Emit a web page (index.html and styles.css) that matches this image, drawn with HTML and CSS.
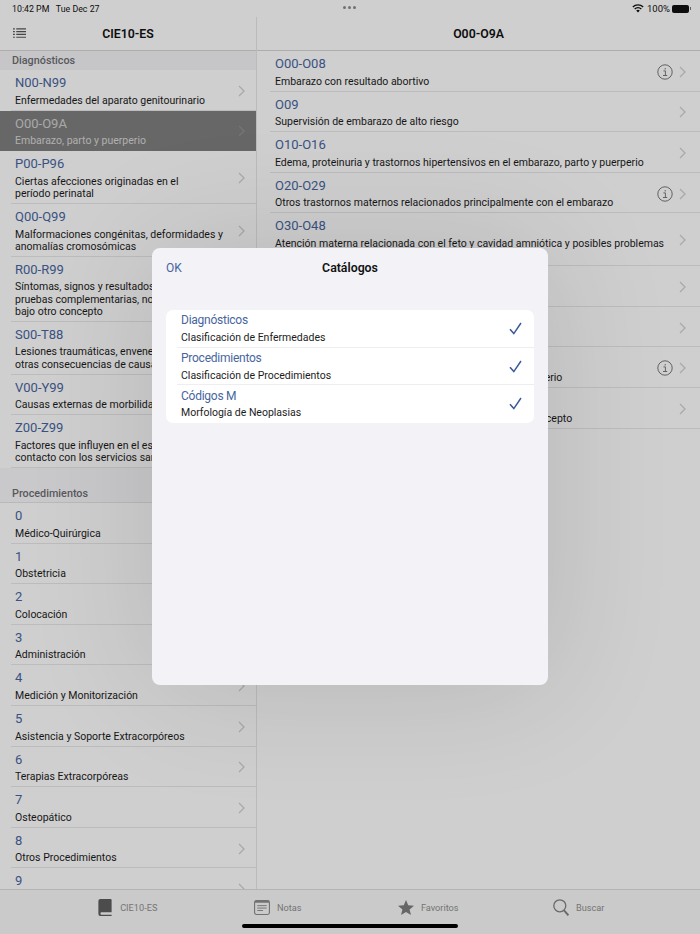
FILE: index.html
```html
<!DOCTYPE html>
<html lang="es">
<head>
<meta charset="utf-8">
<title>CIE10-ES</title>
<link rel="stylesheet" href="styles.css">
</head>
<body>
<svg class="defs" width="0" height="0" aria-hidden="true">
  <symbol id="chev" viewBox="0 0 7 12"><path d="M1 1l5 5-5 5" fill="none" stroke="currentColor" stroke-width="1.3"/></symbol>
  <symbol id="info" viewBox="0 0 16 16"><circle cx="8" cy="8" r="7.200" fill="none" stroke="currentColor" stroke-width="1"/><path d="M6.400 6.900h2v4.500M6 11.500h4.200M8.200 4v1.500" fill="none" stroke="currentColor" stroke-width="1"/></symbol>
  <symbol id="check" viewBox="0 0 13 13"><path d="M1 7.200l3.800 4.400L12 1" fill="none" stroke="currentColor" stroke-width="1.500"/></symbol>
</svg>
<div class="app">
  <div class="status">
    <span class="status-time">10:42 PM&nbsp;&nbsp;&nbsp;Tue Dec 27</span>
    <span class="status-dots"><i></i><i></i><i></i></span>
    <span class="status-right">
      <svg class="wifi" viewBox="0 0 14 10"><path d="M7 9.600L4.900 7.400a3 3 0 0 1 4.200 0zM3.700 6.200L2.600 5a6.300 6.300 0 0 1 8.800 0l-1.100 1.200a4.700 4.700 0 0 0-6.600 0zM1.500 3.900L.4 2.800a9.400 9.400 0 0 1 13.200 0l-1.100 1.100a7.800 7.800 0 0 0-11 0z" fill="#111"/></svg>
      <span>100%</span>
      <span class="battery"></span>
    </span>
  </div>
  <div class="columns">
    <aside class="side">
      <div class="nav nav-side">
        <svg class="list-icon" viewBox="0 0 14 13"><path d="M0 1.500h2M3.500 1.500H14M0 4.500h2M3.500 4.500H14M0 7.500h2M3.500 7.500H14M0 10.500h2M3.500 10.500H14" stroke="#555" stroke-width="1.200" fill="none"/></svg>
        <h1 class="nav-title">CIE10-ES</h1>
      </div>
      <div class="side-scroll">
        <div class="section first">Diagnósticos</div>
        <div class="row"><div class="txt"><div class="code">N00-N99</div><div class="sub">Enfermedades del aparato genitourinario</div></div><svg class="chev"><use href="#chev"/></svg></div>
        <div class="row sel"><div class="txt"><div class="code">O00-O9A</div><div class="sub">Embarazo, parto y puerperio</div></div><svg class="chev"><use href="#chev"/></svg></div>
        <div class="row"><div class="txt"><div class="code">P00-P96</div><div class="sub">Ciertas afecciones originadas en el<br>período perinatal</div></div><svg class="chev"><use href="#chev"/></svg></div>
        <div class="row"><div class="txt"><div class="code">Q00-Q99</div><div class="sub">Malformaciones congénitas, deformidades y<br>anomalías cromosómicas</div></div><svg class="chev"><use href="#chev"/></svg></div>
        <div class="row"><div class="txt"><div class="code">R00-R99</div><div class="sub">Síntomas, signos y resultados anormales de<br>pruebas complementarias, no clasificados<br>bajo otro concepto</div></div><svg class="chev"><use href="#chev"/></svg></div>
        <div class="row"><div class="txt"><div class="code">S00-T88</div><div class="sub">Lesiones traumáticas, envenenamientos y<br>otras consecuencias de causas externas</div></div><svg class="chev"><use href="#chev"/></svg></div>
        <div class="row"><div class="txt"><div class="code">V00-Y99</div><div class="sub">Causas externas de morbilidad</div></div><svg class="chev"><use href="#chev"/></svg></div>
        <div class="row"><div class="txt"><div class="code">Z00-Z99</div><div class="sub">Factores que influyen en el estado de salud y<br>contacto con los servicios sanitarios</div></div><svg class="chev"><use href="#chev"/></svg></div>
        <div class="section second">Procedimientos</div>
        <div class="row"><div class="txt"><div class="code">0</div><div class="sub">Médico-Quirúrgica</div></div><svg class="chev"><use href="#chev"/></svg></div>
        <div class="row"><div class="txt"><div class="code">1</div><div class="sub">Obstetricia</div></div><svg class="chev"><use href="#chev"/></svg></div>
        <div class="row"><div class="txt"><div class="code">2</div><div class="sub">Colocación</div></div><svg class="chev"><use href="#chev"/></svg></div>
        <div class="row"><div class="txt"><div class="code">3</div><div class="sub">Administración</div></div><svg class="chev"><use href="#chev"/></svg></div>
        <div class="row"><div class="txt"><div class="code">4</div><div class="sub">Medición y Monitorización</div></div><svg class="chev"><use href="#chev"/></svg></div>
        <div class="row"><div class="txt"><div class="code">5</div><div class="sub">Asistencia y Soporte Extracorpóreos</div></div><svg class="chev"><use href="#chev"/></svg></div>
        <div class="row"><div class="txt"><div class="code">6</div><div class="sub">Terapias Extracorpóreas</div></div><svg class="chev"><use href="#chev"/></svg></div>
        <div class="row"><div class="txt"><div class="code">7</div><div class="sub">Osteopático</div></div><svg class="chev"><use href="#chev"/></svg></div>
        <div class="row"><div class="txt"><div class="code">8</div><div class="sub">Otros Procedimientos</div></div><svg class="chev"><use href="#chev"/></svg></div>
        <div class="row"><div class="txt"><div class="code">9</div><div class="sub">&nbsp;</div></div><svg class="chev"><use href="#chev"/></svg></div>
      </div>
    </aside>
    <main class="detail">
      <div class="nav"><h2 class="nav-title">O00-O9A</h2></div>
      <div class="detail-list">
        <div class="row"><div class="txt"><div class="code">O00-O08</div><div class="sub">Embarazo con resultado abortivo</div></div><svg class="info"><use href="#info"/></svg><svg class="chev"><use href="#chev"/></svg></div>
        <div class="row"><div class="txt"><div class="code">O09</div><div class="sub">Supervisión de embarazo de alto riesgo</div></div><svg class="chev"><use href="#chev"/></svg></div>
        <div class="row"><div class="txt"><div class="code">O10-O16</div><div class="sub">Edema, proteinuria y trastornos hipertensivos en el embarazo, parto y puerperio</div></div><svg class="chev"><use href="#chev"/></svg></div>
        <div class="row"><div class="txt"><div class="code">O20-O29</div><div class="sub">Otros trastornos maternos relacionados principalmente con el embarazo</div></div><svg class="info"><use href="#info"/></svg><svg class="chev"><use href="#chev"/></svg></div>
        <div class="row"><div class="txt"><div class="code">O30-O48</div><div class="sub">Atención materna relacionada con el feto y cavidad amniótica y posibles problemas<br>de parto</div></div><svg class="chev"><use href="#chev"/></svg></div>
        <div class="row"><div class="txt"><div class="code">O60-O77</div><div class="sub">Complicaciones del trabajo de parto y del parto</div></div><svg class="chev"><use href="#chev"/></svg></div>
        <div class="row"><div class="txt"><div class="code">O80-O82</div><div class="sub">Parto</div></div><svg class="chev"><use href="#chev"/></svg></div>
        <div class="row"><div class="txt"><div class="code">O85-O92</div><div class="sub">Complicaciones relacionadas principalmente con el puerperio</div></div><svg class="info"><use href="#info"/></svg><svg class="chev"><use href="#chev"/></svg></div>
        <div class="row"><div class="txt"><div class="code">O94-O9A</div><div class="sub">Otras afecciones obstétricas no clasificadas bajo otro concepto</div></div><svg class="chev"><use href="#chev"/></svg></div>
      </div>
    </main>
  </div>
  <nav class="tabbar">
    <div class="tab">
      <svg class="tab-icon" viewBox="0 0 14 18"><path d="M2 0h11a1 1 0 0 1 1 1v13H3a1.400 1.400 0 0 0 0 2.600h11V18H2a2 2 0 0 1-2-2V2a2 2 0 0 1 2-2z" fill="#5d5d5d"/></svg>
      <span>CIE10-ES</span>
    </div>
    <div class="tab">
      <svg class="tab-icon" viewBox="0 0 17 16"><rect x=".6" y=".6" width="15.800" height="14.800" rx="2" fill="none" stroke="#8c8c8c" stroke-width="1.200"/><path d="M1 1.600a1 1 0 0 1 1-1h13a1 1 0 0 1 1 1V3H1z" fill="#8c8c8c"/><path d="M3.500 6h10M3.500 8.600h10M3.500 11.200h6" stroke="#8c8c8c" stroke-width="1" fill="none"/></svg>
      <span>Notas</span>
    </div>
    <div class="tab">
      <svg class="tab-icon" viewBox="0 0 18 17"><path d="M9 0l2.500 6 6.500.5-5 4.200 1.600 6.300L9 13.600 3.400 17 5 10.700 0 6.500 6.500 6z" fill="#7d7d7d"/></svg>
      <span>Favoritos</span>
    </div>
    <div class="tab">
      <svg class="tab-icon" viewBox="0 0 16 17"><circle cx="6.800" cy="6.800" r="6" fill="none" stroke="#808080" stroke-width="1.300"/><path d="M11 11.300l4.400 5" stroke="#808080" stroke-width="1.800" fill="none"/></svg>
      <span>Buscar</span>
    </div>
  </nav>
  <div class="scrim"></div>
  <section class="modal">
    <header class="modal-head">
      <span class="ok">OK</span>
      <h3 class="modal-title">Catálogos</h3>
    </header>
    <div class="card">
      <div class="card-row"><div class="txt"><div class="code">Diagnósticos</div><div class="sub">Clasificación de Enfermedades</div></div><svg class="check"><use href="#check"/></svg></div>
      <div class="card-row"><div class="txt"><div class="code">Procedimientos</div><div class="sub">Clasificación de Procedimientos</div></div><svg class="check"><use href="#check"/></svg></div>
      <div class="card-row"><div class="txt"><div class="code">Códigos M</div><div class="sub">Morfología de Neoplasias</div></div><svg class="check"><use href="#check"/></svg></div>
    </div>
  </section>
  <div class="home"></div>
</div>
</body>
</html>
```

FILE: styles.css
```css
* { box-sizing: border-box; }
html, body { margin: 0; padding: 0; }
body { font-family: Roboto, "Liberation Sans", sans-serif; color: #111; background: #fff; }
.defs { position: absolute; }
.app { position: relative; width: 700px; height: 934px; overflow: hidden; display: flex; flex-direction: column; background: #fdfdfd; }

.status { flex: none; height: 17px; display: flex; align-items: center; justify-content: space-between; padding: 0 11px 0 12px; font-size: 9.500px; color: #111; position: relative; }
.status-time { font-size: 8.800px; }
.status-dots { position: absolute; left: 343px; top: 6px; display: flex; gap: 2px; }
.status-dots i { width: 3px; height: 3px; border-radius: 50%; background: #8a8a8a; }
.status-right { display: flex; align-items: center; gap: 2px; }
.wifi { width: 12px; height: 9px; margin-right: 1px; }
.battery { width: 17px; height: 8px; border-radius: 2px; background: #111; position: relative; }
.battery::after { content: ""; position: absolute; right: -2px; top: 2.500px; width: 1px; height: 3px; background: #777; }

.columns { flex: 1; min-height: 0; display: flex; }
.side { flex: none; width: 257px; border-right: 1px solid #e4e4e4; display: flex; flex-direction: column; min-height: 0; }
.detail { flex: 1; min-width: 0; display: flex; flex-direction: column; }
.nav { flex: none; height: 34px; display: flex; align-items: center; justify-content: center; position: relative; padding-top: 1px; border-bottom: 1px solid #d4d4d4; }
.nav-title { margin: 0; font-size: 12.300px; font-weight: 600; color: #111; }
.list-icon { position: absolute; left: 13px; top: 10px; width: 13px; height: 13px; }
.side-scroll { flex: 1; min-height: 0; overflow: hidden; }

.section { color: #6d6d72; font-size: 10.800px; font-weight: 500; padding-left: 12px; }
.section.first { height: 19px; line-height: 19px; background: #f2f2f5; }
.section.second { height: 35px; padding-top: 18px; line-height: 15px; background: #f6f6f8; border-bottom: 1px solid #e2e2e2; }

.row { display: flex; align-items: center; margin-left: 11px; padding: 5px 11px 2.800px 4px; border-bottom: 1px solid #e6e6e6; }
.txt { flex: 1; min-width: 0; }
.code { color: #48659e; font-size: 13px; line-height: 16px; margin-bottom: 3.600px; }
.sub { color: #1c1c1c; font-size: 10.500px; line-height: 12.200px; white-space: nowrap; }
.chev { flex: none; width: 7px; height: 12px; color: #cfcfd2; }
.row.sel { margin-left: 0; padding-left: 15px; background: #7e7e7e; border-bottom-color: #7e7e7e; }
.sel .code { color: #cfcfcf; }
.sel .sub { color: #d6d6d6; }
.sel .chev { color: #8f8f8f; }

.detail-list { padding-left: 13px; }
.detail-list .row { margin-left: 0; padding-left: 5px; padding-right: 14px; }
.info { flex: none; width: 16px; height: 16px; margin-right: 6px; color: #777; }

.tabbar { flex: none; height: 45px; display: grid; grid-template-columns: repeat(4, 150.500px); padding-left: 52px; background: #f7f7f7; border-top: 1px solid #dcdcdc; position: relative; }
.tab { display: flex; align-items: center; justify-content: center; gap: 7px; color: #8f8f8f; font-size: 9.200px; padding-bottom: 9px; }
.tab-icon { width: 16px; height: 17px; flex: none; }

.scrim { position: absolute; inset: 0; background: rgba(0, 0, 0, .18); }
.modal { position: absolute; left: 152px; top: 248px; width: 396px; height: 437px; border-radius: 8px; background: #f2f2f7; box-shadow: 0 0 130px rgba(0, 0, 0, .12); display: flex; flex-direction: column; padding: 0 14px; }
.modal-head { flex: none; height: 62px; padding-top: 12px; position: relative; text-align: center; }
.ok { position: absolute; left: 0; top: 12px; font-size: 12px; line-height: 17px; color: #48659e; }
.modal-title { margin: 0; font-size: 12.300px; line-height: 17px; font-weight: 600; color: #111; }
.card { background: #fff; border-radius: 7px; padding-left: 11px; }
.card-row { display: flex; align-items: center; height: 37.700px; padding: 0 12px 0 4px; border-bottom: 1.500px solid #eeeef2; }
.card-row:last-child { border-bottom-color: transparent; }
.card .code { font-size: 12px; letter-spacing: -.25px; }
.check { flex: none; width: 13px; height: 13px; color: #3a5a98; }
.home { position: absolute; left: 242px; top: 924px; width: 216px; height: 4px; border-radius: 2px; background: #000; }
```
